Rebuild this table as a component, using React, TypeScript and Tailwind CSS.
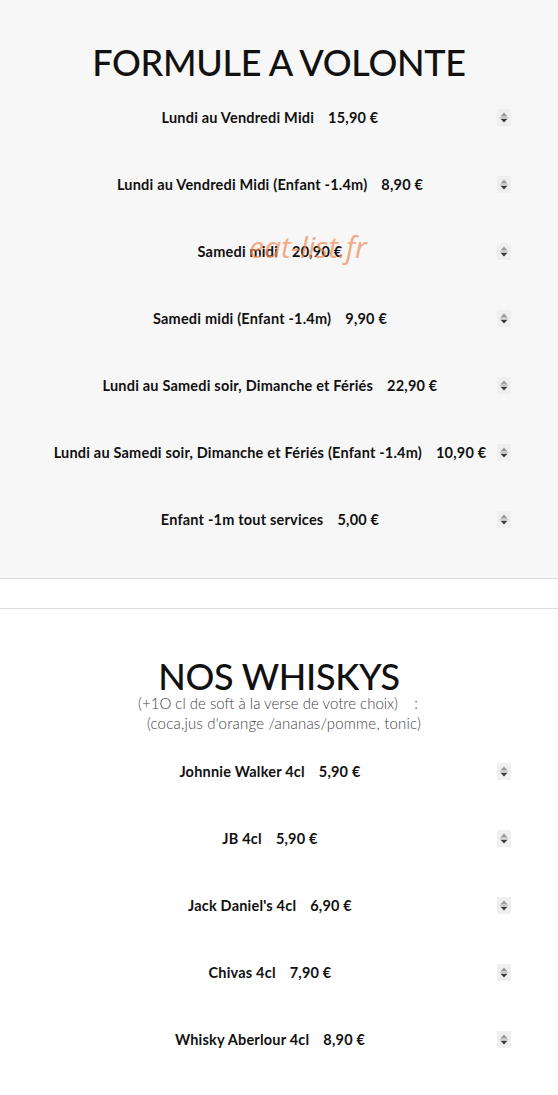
import React from "react";

const formule: [string, string][] = [
  ["Lundi au Vendredi Midi", "15,90 €"],
  ["Lundi au Vendredi Midi (Enfant -1.4m)", "8,90 €"],
  ["Samedi midi", "20,90 €"],
  ["Samedi midi (Enfant -1.4m)", "9,90 €"],
  ["Lundi au Samedi soir, Dimanche et Fériés", "22,90 €"],
  ["Lundi au Samedi soir, Dimanche et Fériés (Enfant -1.4m)", "10,90 €"],
  ["Enfant -1m tout services", "5,00 €"],
];

const whiskys: [string, string][] = [
  ["Johnnie Walker 4cl", "5,90 €"],
  ["JB 4cl", "5,90 €"],
  ["Jack Daniel's 4cl", "6,90 €"],
  ["Chivas 4cl", "7,90 €"],
  ["Whisky Aberlour 4cl", "8,90 €"],
];

function Spinner() {
  return (
    <div className="w-[14px] h-[17px] shrink-0 ml-[-43px] bg-[#efefef] flex items-center justify-center">
      <svg width="14" height="17" viewBox="0 0 14 17">
        <path d="M7 3.5 L10.5 7.5 L3.5 7.5 Z" fill="#9a9a9a" />
        <rect x="2.5" y="8.2" width="9" height="0.8" fill="#c8c8c8" />
        <path d="M3.5 9.8 L10.5 9.8 L7 13.5 Z" fill="#3a3a3a" />
      </svg>
    </div>
  );
}

function Row({ name, price }: { name: string; price: string }) {
  return (
    <div className="h-[67px] flex items-center">
      <div className="w-[540px] shrink-0 text-center text-[14.5px] font-bold text-[#111] tracking-[0.2px]">
        <span>{name}</span>
        <span className="ml-[14px]">{price}</span>
      </div>
      <Spinner />
    </div>
  );
}

export default function App() {
  return (
    <div
      className="w-[558px] min-h-[1095px] bg-white"
      style={{ fontFamily: "Lato, 'Open Sans', sans-serif" }}
    >
      <section className="relative bg-[#f7f7f7] pt-[41px] pb-[25px] border-b border-[#dcdcdc]">
        <h2 className="text-center text-[36px] leading-[43px] font-medium text-[#111] tracking-[-0.3px]">
          FORMULE A VOLONTE
        </h2>
        <div>
          {formule.map(([n, p]) => (
            <Row key={n + p} name={n} price={p} />
          ))}
        </div>
        <div
          className="absolute left-[249px] top-[224px] text-[30px] italic text-[#f08a52] opacity-70 pointer-events-none"
          style={{ fontFamily: "'Open Sans', sans-serif" }}
        >
          eat-list.fr
        </div>
      </section>
      <div className="h-[30px] border-b border-[#dcdcdc]" />
      <section className="pt-[50px]">
        <h2 className="text-center text-[36px] leading-[34px] font-medium text-[#111] tracking-[-0.3px]">
          NOS WHISKYS
        </h2>
        <div className="text-center text-[15px] leading-[20px] text-[#444] font-light">
          <div className="pr-[2px]">(+1O cl de soft à la verse de votre choix)&nbsp;&nbsp;&nbsp; :</div>
          <div className="pl-[10px] tracking-[0.2px]">(coca,jus d'orange /ananas/pomme, tonic)</div>
        </div>
        <div className="mt-[5px]">
          {whiskys.map(([n, p]) => (
            <Row key={n} name={n} price={p} />
          ))}
        </div>
      </section>
    </div>
  );
}
